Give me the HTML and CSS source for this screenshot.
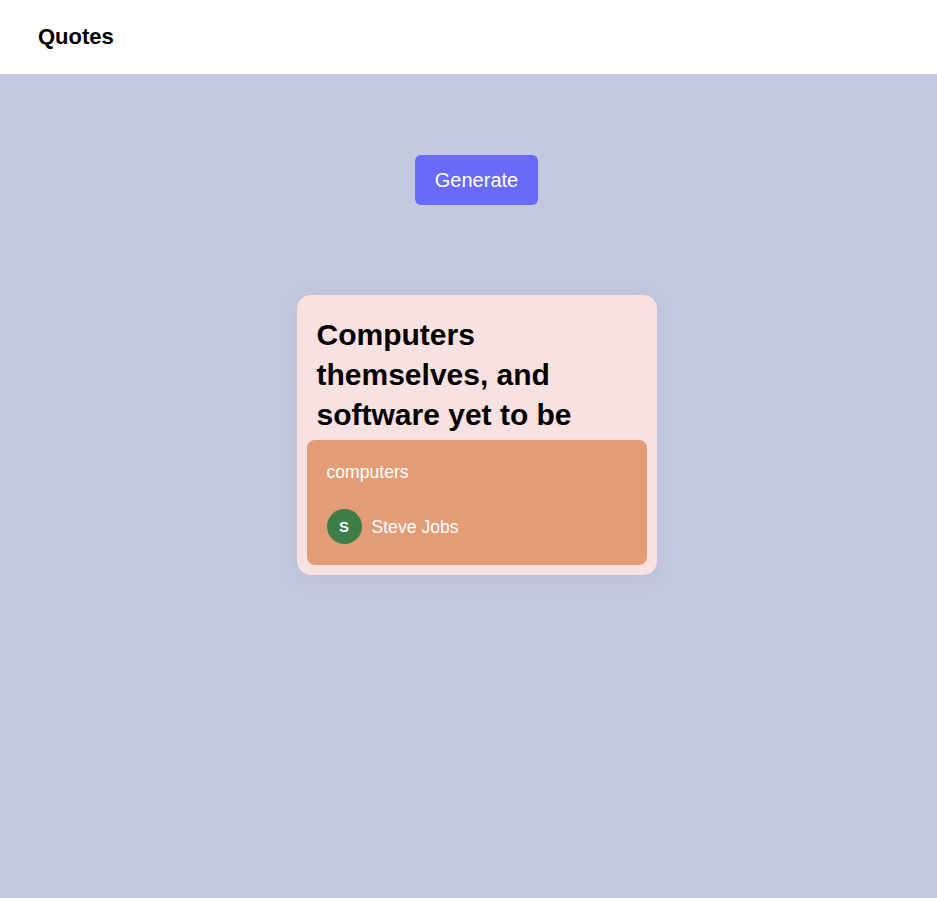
FILE: index.html
```html
<!DOCTYPE html>
<html lang="en">
<head>
<meta charset="utf-8">
<title>Quotes</title>
<link rel="stylesheet" href="styles.css">
</head>
<body>
<header class="topbar">
  <h1 class="brand">Quotes</h1>
</header>
<main class="main">
  <button class="generate">Generate</button>
  <article class="card">
    <div class="quote">Computers themselves, and software yet to be developed, will revolutionize the way we learn.</div>
    <div class="meta">
      <div class="tag">computers</div>
      <div class="author">
        <span class="avatar">S</span>
        <span class="name">Steve Jobs</span>
      </div>
    </div>
  </article>
</main>
</body>
</html>
```

FILE: styles.css
```css
* { box-sizing: border-box; }
html, body { margin: 0; padding: 0; }
body {
  font-family: "Liberation Sans", Arial, sans-serif;
  background: #c4c8df;
  min-height: 898px;
}
.topbar {
  background: #ffffff;
  height: 74px;
  display: flex;
  align-items: center;
  padding: 0 38px;
}
.brand {
  margin: 0;
  font-size: 22px;
  font-weight: 700;
  color: #000;
}
.main {
  display: flex;
  flex-direction: column;
  align-items: center;
  padding-top: 81px;
  padding-left: 16px;
}
.generate {
  width: 123px;
  height: 50px;
  border: none;
  border-radius: 6px;
  background: #6a6af9;
  color: #fff;
  font-family: inherit;
  font-size: 20px;
  padding: 0;
  cursor: pointer;
}
.card {
  margin-top: 90px;
  width: 360px;
  height: 280px;
  background: #f8e2e1;
  border-radius: 14px;
  box-shadow: 0 4px 18px rgba(80, 80, 120, 0.08);
  display: flex;
  flex-direction: column;
  padding-bottom: 10px;
}
.quote {
  flex: 1;
  min-height: 0;
  overflow: hidden;
  padding: 20px 20px 0;
  font-size: 30px;
  font-weight: 700;
  line-height: 40px;
  color: #000;
}
.meta {
  margin: 0 10px;
  height: 125px;
  background: #e39c76;
  border-radius: 8px;
  padding: 21px 20px 20px;
  color: #fff;
}
.tag {
  font-size: 17.6px;
  line-height: 22px;
}
.author {
  margin-top: 26px;
  display: flex;
  align-items: center;
  gap: 10px;
}
.avatar {
  width: 35px;
  height: 35px;
  border-radius: 50%;
  background: #3d7d47;
  color: #fff;
  font-weight: 700;
  font-size: 15px;
  display: flex;
  align-items: center;
  justify-content: center;
}
.name {
  font-size: 17.6px;
  position: relative;
  top: 1px;
}
```
